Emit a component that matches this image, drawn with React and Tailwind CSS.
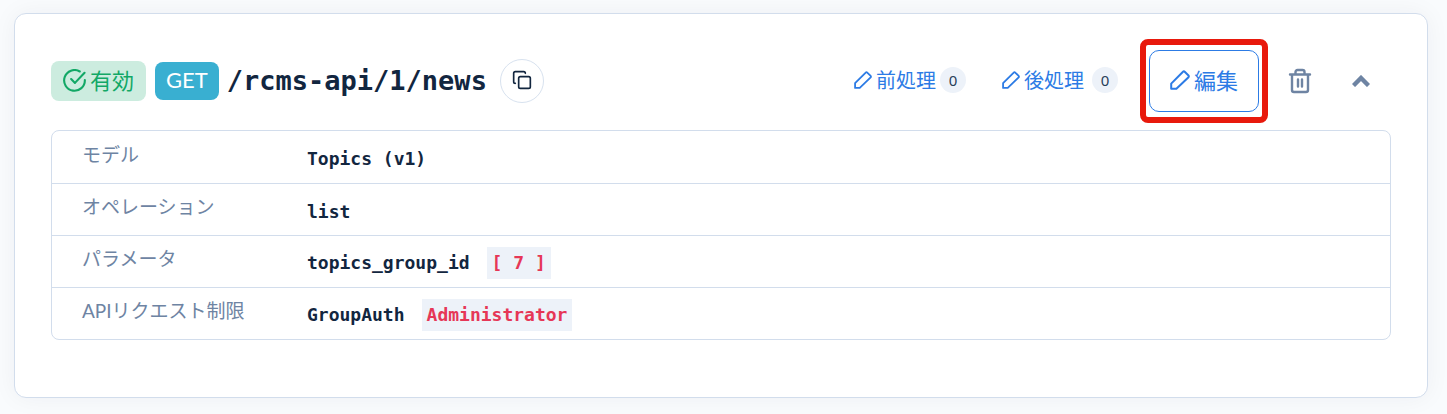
import { Copy } from "lucide-react";

const rows = [
  { label: "モデル", value: "Topics (v1)" },
  { label: "オペレーション", value: "list" },
  { label: "パラメータ", value: "topics_group_id", code: "[ 7 ]" },
  { label: "APIリクエスト制限", value: "GroupAuth", code: "Administrator" },
];

const PencilIcon = ({ className }) => (
  <svg viewBox="0 0 20 20" className={className} fill="none" stroke="currentColor" strokeWidth="2" strokeLinejoin="round" aria-hidden="true">
    <path d="M1.200 18.800V13.600L13 1.700a1.200 1.200 0 0 1 1.700 0l3.800 3.800a1.200 1.200 0 0 1 0 1.700L6.400 18.800z" />
  </svg>
);

const CheckCircleIcon = ({ className }) => (
  <svg viewBox="0 0 24 24" className={className} fill="none" stroke="currentColor" strokeWidth="2.2" strokeLinecap="round" strokeLinejoin="round" aria-hidden="true">
    <path d="M17.500 2.600A10.800 10.800 0 1 0 22.800 11.500" />
    <path d="M8.500 10.500l4 4L22.500 4" />
  </svg>
);

const TrashIcon = ({ className }) => (
  <svg viewBox="0 0 24 26" className={className} fill="none" stroke="currentColor" strokeWidth="2.4" strokeLinecap="round" strokeLinejoin="round" aria-hidden="true">
    <path d="M2 6.500h20M4 6.500V22a2 2 0 0 0 2 2h12a2 2 0 0 0 2-2V6.500M7.500 6V4a2 2 0 0 1 2-2h5a2 2 0 0 1 2 2v2M10 11.500v7M14 11.500v7" />
  </svg>
);

const ChevronUpIcon = ({ className }) => (
  <svg viewBox="0 0 18 12" className={className} fill="none" stroke="currentColor" strokeWidth="4.4" aria-hidden="true">
    <path d="M1.500 10.500L9 3l7.500 7.500" />
  </svg>
);

const HookButton = ({ label, count, className }) => (
  <button type="button" className={`flex items-center pb-0.5 text-[#2c7be5] ${className}`}>
    <span className="flex items-center gap-1 text-[20px]">
      <PencilIcon className="size-[18px]" />
      {label}
    </span>
    <span className="flex size-[26px] items-center justify-center rounded-full bg-[#edf2f9] font-['Noto_Sans',sans-serif] text-[15px] text-[#283e59]">
      {count}
    </span>
  </button>
);

const App = () => {
  return (
    <main className="bg-[#f9fbfd] pt-[13px] pr-[19px] pb-4 pl-[14px] font-['Lato','Noto_Sans_CJK_JP',sans-serif] text-[#12263f]">
      <section className="rounded-xl border border-[#d2ddec] bg-white px-9 pt-9 pb-[57px] shadow-[0_0_24px_rgba(18,38,63,0.05)]">
        <header className="mb-[18px] flex items-center">
          <span className="flex h-10 items-center gap-1 rounded-lg bg-[#ccecdf] px-3 pb-0.5 text-[22px] text-[#12a866]">
            <CheckCircleIcon className="size-[23px]" />
            有効
          </span>
          <span className="ml-[9px] flex h-[38px] items-center rounded-lg bg-[#39afd1] px-[11px] pb-1 text-[22px] text-white">GET</span>
          <h2 className="ml-2 font-['DejaVu_Sans_Mono',monospace] text-[27px] font-bold">/rcms-api/1/news</h2>
          <button
            type="button"
            aria-label="コピー"
            className="ml-[13px] flex size-11 items-center justify-center rounded-full border border-[#d8e2ef] pb-0.5"
          >
            <Copy className="size-5" />
          </button>

          <div className="ml-auto flex items-center">
            <HookButton label="前処理" count={0} className="mr-9 gap-1" />
            <HookButton label="後処理" count={0} className="mr-[31px] gap-2" />
            <div className="relative">
              <button
                type="button"
                className="flex h-[62px] items-center gap-1 rounded-[10px] border border-[#2c7be5] px-5 pb-0.5 text-[22px] text-[#2c7be5]"
              >
                <PencilIcon className="size-5" />
                編集
              </button>
              {/* highlight */}
              <span className="pointer-events-none absolute -inset-x-[9px] -inset-y-[11px] rounded-lg border-[6px] border-[#e8190c]" />
            </div>
            <button type="button" aria-label="削除" className="ml-[29px] text-[#6e84a3]">
              <TrashIcon className="h-[26px] w-6" />
            </button>
            <button type="button" aria-label="閉じる" className="mr-[21px] ml-10 text-[#6e84a3]">
              <ChevronUpIcon className="h-3 w-[18px]" />
            </button>
          </div>
        </header>

        <div className="rounded-lg border border-[#d2ddec]">
          <table className="w-full text-left">
            <tbody className="divide-y divide-[#d2ddec]">
              {rows.map((row) => (
                <tr key={row.label} className="h-[52px]">
                  <th scope="row" className="w-[255px] pb-1 pl-[30px] text-[19px] font-normal text-[#6e84a3]">
                    {row.label}
                  </th>
                  <td className="pt-1 font-['DejaVu_Sans_Mono',monospace] text-[18px] font-bold">
                    {row.value}
                    {row.code && (
                      <code className="ml-[17px] inline-block h-8 bg-[#edf2f9] px-[5px] font-['DejaVu_Sans_Mono',monospace] leading-8 text-[#e63757]">
                        {row.code}
                      </code>
                    )}
                  </td>
                </tr>
              ))}
            </tbody>
          </table>
        </div>
      </section>
    </main>
  );
};

export default App;
